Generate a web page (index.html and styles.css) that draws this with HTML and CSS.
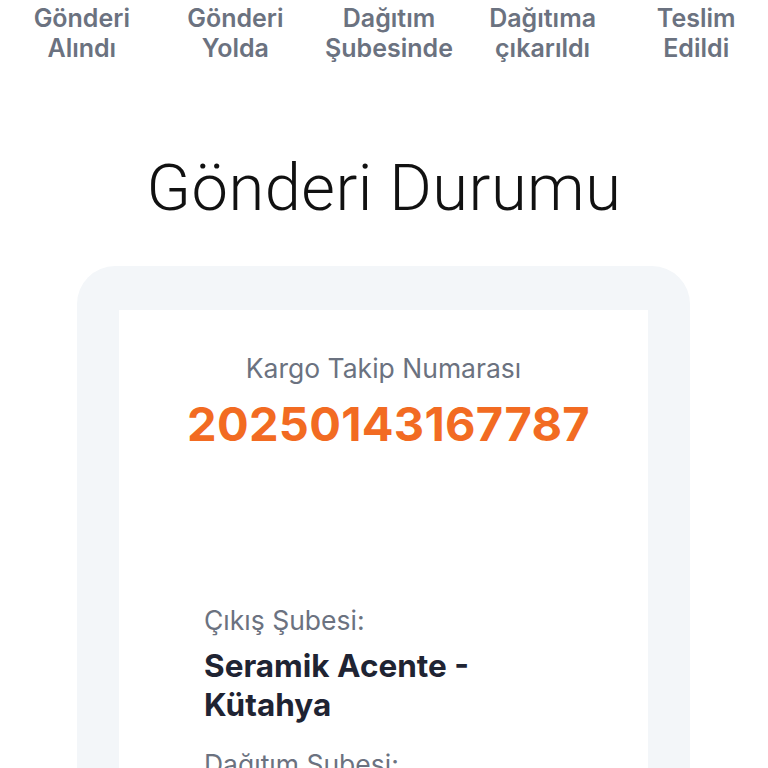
FILE: index.html
```
<!DOCTYPE html>
<html lang="tr">
<head>
<meta charset="utf-8">
<link rel="stylesheet" href="styles.css">
</head>
<body>
<div class="steps">
  <div class="step">Gönderi<br>Alındı</div>
  <div class="step">Gönderi<br>Yolda</div>
  <div class="step">Dağıtım<br>Şubesinde</div>
  <div class="step">Dağıtıma<br>çıkarıldı</div>
  <div class="step">Teslim<br>Edildi</div>
</div>
<h1 class="title">Gönderi Durumu</h1>
<div class="card">
  <div class="inner">
    <div class="track-label">Kargo Takip Numarası</div>
    <div class="track-no">20250143167787</div>
    <div class="details">
      <div class="field">
        <div class="field-label">Çıkış Şubesi:</div>
        <div class="field-value">Seramik Acente - Kütahya</div>
      </div>
      <div class="field">
        <div class="field-label">Dağıtım Şubesi:</div>
        <div class="field-value">Kütahya Merkez</div>
      </div>
    </div>
  </div>
</div>
</body>
</html>
```
FILE: styles.css
```
html, body { margin: 0; padding: 0; background: #ffffff; }
body { font-family: Inter, "Noto Sans", sans-serif; overflow: hidden; height: 768px; width: 768px; }
.steps { display: grid; grid-template-columns: repeat(5, 1fr); width: 768px; padding: 3px 0 0; margin-left: 5px; }
.step { text-align: center; color: #6b7280; font-size: 25px; font-weight: 600; line-height: 30px; }
.title { margin: 87px 0 0; text-align: center; font-family: Roboto, sans-serif; font-weight: 300; font-size: 65px; line-height: 76px; color: #111111; letter-spacing: 0.5px; }
.card { margin: 40px 78px 0 77px; background: #f3f6f9; border-radius: 38px 38px 0 0; padding: 44px 42px 0; }
.inner { background: #ffffff; padding: 40px 0 0; height: 600px; }
.track-label { text-align: center; color: #6b7280; font-size: 26.5px; line-height: 36px; }
.track-no { text-align: center; color: #f26b22; font-size: 47px; font-weight: 700; line-height: 56px; margin-top: 10px; padding-left: 10px; letter-spacing: 0.3px; }
.details { padding: 150px 0 0 85px; display: flex; flex-direction: column; gap: 22px; }
.field { width: 300px; }
.field-label { color: #6b7280; font-size: 26.5px; line-height: 36px; }
.field-value { color: #1f2433; font-size: 31.5px; font-weight: 700; line-height: 39px; margin-top: 8px; }
```
